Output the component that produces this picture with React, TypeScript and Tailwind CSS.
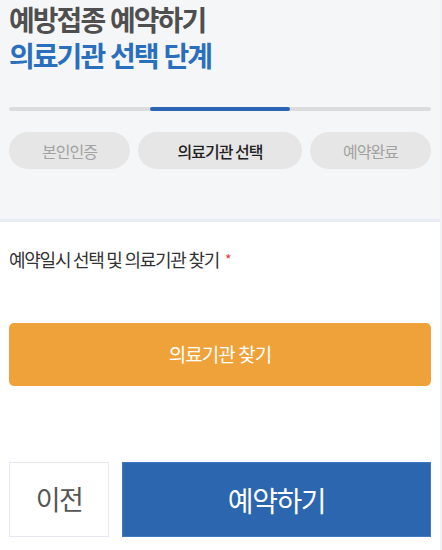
import React from 'react';

const STEPS = [
  { label: '본인인증', active: false },
  { label: '의료기관 선택', active: true },
  { label: '예약완료', active: false },
];

function App() {
  return (
    <div
      className="w-[442px] h-[550px] overflow-hidden flex bg-white"
      style={{ fontFamily: '"Noto Sans CJK KR", "Noto Sans", sans-serif' }}
    >
      <div className="w-[440px] flex flex-col">
        {/* Header */}
        <section className="h-[222px] bg-[#f5f6f8] border-b-[3px] border-[#e9ecf3] px-[9px] pt-[4px]">
          <h1
            className="text-[28px] leading-[36px] font-bold tracking-[-0.07em]"
            style={{ fontFamily: '"Liberation Sans", "Noto Sans CJK KR", sans-serif' }}
          >
            <span className="block text-[#4f4f4f]">예방접종 예약하기</span>
            <span className="block text-[#2a6fbe]">의료기관 선택 단계</span>
          </h1>

          <div className="mt-[31px] grid grid-cols-3 h-[4px] rounded-full bg-[#dcdcdc] overflow-hidden">
            <div />
            <div className="bg-[#2b64b3] rounded-full" />
            <div />
          </div>

          <div className="mt-[21px] flex gap-[8px]">
            {STEPS.map((step) => (
              <div
                key={step.label}
                className={
                  step.active
                    ? 'flex-1 h-[37px] rounded-full bg-[#e6e6e6] flex items-center justify-center text-[16px] tracking-[-0.06em] text-[#222] font-medium'
                    : 'w-[121px] h-[37px] rounded-full bg-[#e6e6e6] flex items-center justify-center text-[16px] tracking-[-0.06em] text-[#a2a2a2]'
                }
              >
                {step.label}
              </div>
            ))}
          </div>
        </section>

        {/* Body */}
        <main className="px-[9px] pt-[25px]">
          <p className="text-[18px] leading-[24px] tracking-[-0.07em] text-[#333]">
            예약일시 선택 및 의료기관 찾기
            <span className="ml-[6px] text-[#e53935] text-[14px] align-top">*</span>
          </p>

          <button className="mt-[52px] w-full h-[63px] rounded-[5px] bg-[#f0a23a] text-white text-[19px] tracking-[-0.05em]">
            의료기관 찾기
          </button>

          <div className="mt-[76px] flex gap-[13px]">
            <button className="w-[100px] h-[75px] border border-[#e6e8f5] bg-white text-[#555] text-[27px] tracking-[-0.06em]">
              이전
            </button>
            <button className="flex-1 h-[75px] bg-[#2b66af] border border-[#4078c4] text-white text-[28px] tracking-[-0.05em]">
              예약하기
            </button>
          </div>
        </main>
      </div>
      <div className="w-[2px] bg-[#f1f2f6]" />
    </div>
  );
}

export default App;
